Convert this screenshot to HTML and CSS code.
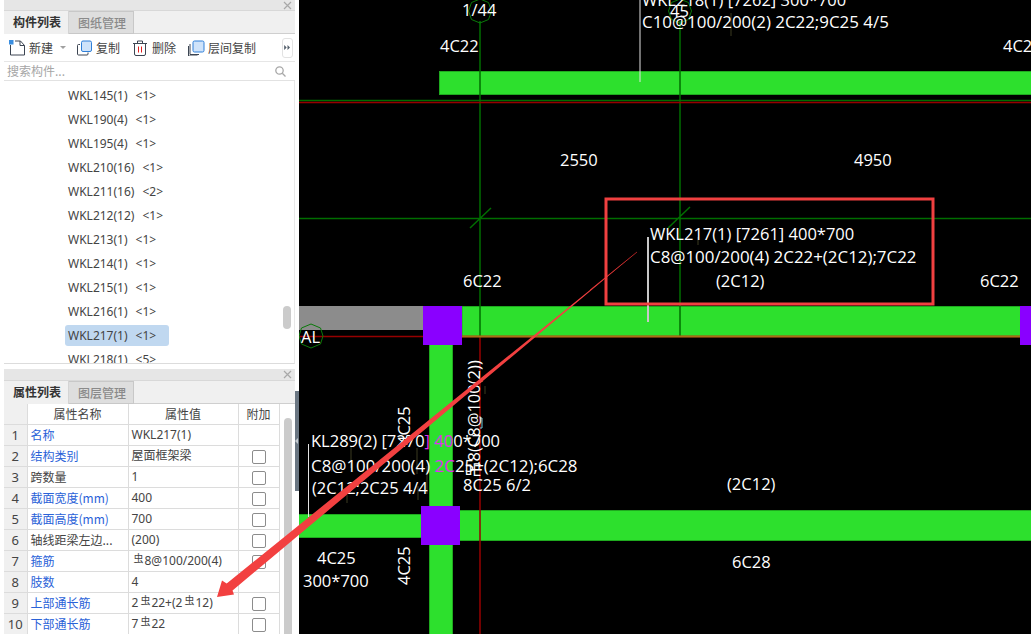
FILE: index.html
```html
<!DOCTYPE html>
<html lang="zh">
<head>
<meta charset="utf-8">
<title>构件列表</title>
<link rel="stylesheet" href="styles.css">
</head>
<body>
<div class="app">
  <aside class="side">
    <section class="panel list-panel">
      <div class="panel-top"><svg class="close" viewBox="0 0 9 9"><path d="M1 1l7 7M8 1l-7 7"/></svg></div>
      <div class="tabs">
        <div class="tab active">构件列表</div>
        <div class="tab">图纸管理</div>
      </div>
      <div class="toolbar">
        <svg class="ico ico-new" viewBox="0 0 16 16"><path class="ln" d="M1.500 5v10h14V5.500L11.500 1H6"/><path class="ln" d="M11 1v4.500h4.500"/><rect class="dot" x="0" y="0" width="4.500" height="4.500"/></svg>
        <span class="tool tool-new">新建</span>
        <span class="caret"></span>
        <svg class="ico ico-copy" viewBox="0 0 16 16"><path class="ln" d="M3 4.500H1.500a1 1 0 0 0-1 1V14a1 1 0 0 0 1 1H10a1 1 0 0 0 1-1v-1.500"/><rect class="sq" x="4.500" y="1" width="10" height="10.500" rx="1.500"/></svg>
        <span class="tool tool-copy">复制</span>
        <svg class="ico ico-del" viewBox="0 0 14 16"><path class="ln" d="M1.500 3.500h11V14a1.500 1.500 0 0 1-1.500 1.500H3A1.500 1.500 0 0 1 1.500 14zM0 3.500h14M4.500 3V1h5v2"/><path class="redbar" d="M5.500 6.500v6M8.500 6.500v6"/></svg>
        <span class="tool tool-del">删除</span>
        <svg class="ico ico-floor" viewBox="0 0 17 16"><path class="ln" d="M2 4v10.500h9M.5 6v10h9"/><rect class="sq" x="5" y="1" width="11" height="11" rx="1.500"/></svg>
        <span class="tool">层间复制</span>
        <span class="more"><svg viewBox="0 0 8 6"><path d="M0 0l3 3-3 3zM4 0l3 3-3 3z"/></svg></span>
      </div>
      <div class="search">
        <span class="placeholder">搜索构件...</span>
        <svg class="mag" viewBox="0 0 11 11"><circle cx="4.500" cy="4.500" r="3.700"/><path d="M7.300 7.300L10.500 10.500"/></svg>
      </div>
      <div class="list-wrap">
        <ul class="list">
          <li><span class="item">WKL145(1)<i>&lt;1&gt;</i></span></li>
          <li><span class="item">WKL190(4)<i>&lt;1&gt;</i></span></li>
          <li><span class="item">WKL195(4)<i>&lt;1&gt;</i></span></li>
          <li><span class="item">WKL210(16)<i>&lt;1&gt;</i></span></li>
          <li><span class="item">WKL211(16)<i>&lt;2&gt;</i></span></li>
          <li><span class="item">WKL212(12)<i>&lt;1&gt;</i></span></li>
          <li><span class="item">WKL213(1)<i>&lt;1&gt;</i></span></li>
          <li><span class="item">WKL214(1)<i>&lt;1&gt;</i></span></li>
          <li><span class="item">WKL215(1)<i>&lt;1&gt;</i></span></li>
          <li><span class="item">WKL216(1)<i>&lt;1&gt;</i></span></li>
          <li><span class="item selected">WKL217(1)<i>&lt;1&gt;</i></span></li>
          <li><span class="item">WKL218(1)<i>&lt;5&gt;</i></span></li>
        </ul>
        <span class="thumb list-thumb"></span>
      </div>
    </section>
    <section class="panel prop-panel">
      <div class="panel-top panel-top-low"><svg class="close" viewBox="0 0 9 9"><path d="M1 1l7 7M8 1l-7 7"/></svg></div>
      <div class="tabs">
        <div class="tab active">属性列表</div>
        <div class="tab">图层管理</div>
      </div>
      <div class="prop-body">
        <table class="props">
          <thead>
            <tr><th class="c-idx"></th><th class="c-name">属性名称</th><th class="c-val">属性值</th><th class="c-add">附加</th></tr>
          </thead>
          <tbody>
            <tr><td class="c-idx">1</td><td class="blue">名称</td><td>WKL217(1)</td><td></td></tr>
            <tr><td class="c-idx">2</td><td class="blue">结构类别</td><td>屋面框架梁</td><td><span class="check"></span></td></tr>
            <tr><td class="c-idx">3</td><td>跨数量</td><td>1</td><td><span class="check"></span></td></tr>
            <tr><td class="c-idx">4</td><td class="blue">截面宽度(mm)</td><td>400</td><td><span class="check"></span></td></tr>
            <tr><td class="c-idx">5</td><td class="blue">截面高度(mm)</td><td>700</td><td><span class="check"></span></td></tr>
            <tr><td class="c-idx">6</td><td>轴线距梁左边...</td><td>(200)</td><td><span class="check"></span></td></tr>
            <tr><td class="c-idx">7</td><td class="blue">箍筋</td><td><span class="rebar">虫</span>8@100/200(4)</td><td><span class="check"></span></td></tr>
            <tr><td class="c-idx">8</td><td class="blue">肢数</td><td>4</td><td></td></tr>
            <tr><td class="c-idx">9</td><td class="blue">上部通长筋</td><td>2<span class="rebar">虫</span>22+(2<span class="rebar">虫</span>12)</td><td><span class="check"></span></td></tr>
            <tr><td class="c-idx">10</td><td class="blue">下部通长筋</td><td>7<span class="rebar">虫</span>22</td><td><span class="check"></span></td></tr>
          </tbody>
        </table>
        <div class="prop-scroll"><span class="thumb prop-thumb"></span></div>
      </div>
    </section>
    <div class="splitter"><span class="split-arrow"></span></div>
  </aside>

  <main class="canvas">
    <svg class="drawing" viewBox="299 0 732 634">
      <!-- beams -->
      <rect class="beam" x="439.500" y="71.500" width="600" height="23"/>
      <rect class="gbeam" x="299" y="306" width="124" height="24"/>
      <rect class="beam" x="462" y="306.500" width="600" height="30"/>
      <rect class="beam" x="429.500" y="340" width="23" height="300"/>
      <rect class="beam" x="295" y="514.500" width="130" height="23"/>
      <rect class="beam" x="458" y="510.500" width="600" height="30"/>
      <!-- axes -->
      <path class="axis-g" d="M299 100.500H1031M299 218.500H1031M480 21V338M680 21V336M470 228L491 208M668 228L690 207"/>
      <path class="axis-r" d="M299 102.500H1031M299 336.500H1031M480 338V634"/>
      <path class="axis-o" d="M462 336.500H1020"/>
      <!-- columns -->
      <rect class="col" x="423" y="306" width="39" height="39"/>
      <rect class="col" x="1020" y="306" width="12" height="39"/>
      <rect class="col" x="421" y="506" width="39" height="39"/>
      <!-- axis bubbles -->
      <path class="bubble" d="M480 -1l8.500 3.500 3 8.500-3 8.500-8.500 3.500-8.500-3.500-3-8.500 3-8.500z"/>
      <path class="bubble" d="M680 -1l8.500 3.500 3 8.500-3 8.500-8.500 3.500-8.500-3.500-3-8.500 3-8.500z"/>
      <path class="bubble" d="M311 324l9.500 4 2.500 8-2.500 8-9.500 4-9.500-4-2.500-8 2.500-8z"/>
      <!-- leaders -->
      <path class="leader" d="M640 0V82M308.500 444V517"/>
      <path class="leader-soft" d="M648 237V322"/>
      <path class="tick" d="M731 13V36M427 466V494M417 448V474M351 446V468M418 486V500M347 495V503M485 386V394M660 230V240M698 237V245"/>
      <path class="redthin" d="M590 290L637 252"/>
      <path class="cyan" d="M480 418h2v10h-2M478 465h3"/>
      <!-- labels -->
      <text x="462" y="16">1/44</text>
      <text x="670" y="17">45</text>
      <text x="642" y="6">WKL218(1) [7262] 300*700</text>
      <text class="wide" x="642" y="28">C10@100/200(2) 2C22;9C25 4/5</text>
      <text x="440" y="52">4C22</text>
      <text x="1003" y="52">4C22</text>
      <text x="560" y="166">2550</text>
      <text x="854" y="166">4950</text>
      <text x="650" y="240">WKL217(1) [7261] 400*700</text>
      <text class="wide" x="650" y="263">C8@100/200(4) 2C22+(2C12);7C22</text>
      <text x="716" y="287">(2C12)</text>
      <text x="463" y="287">6C22</text>
      <text x="980" y="287">6C22</text>
      <text x="301" y="343">AL</text>
      <text x="311" y="447">KL289(2) [7270<tspan class="violet">] 40</tspan>0*700</text>
      <text class="wide" x="311" y="472">C8@100/200(4) <tspan class="violet">2C</tspan>25+(2C12);6C28</text>
      <text x="312" y="494">(2C12;2C25 4/4</text>
      <text x="463" y="491">8C25 6/2</text>
      <text x="727" y="490">(2C12)</text>
      <text x="732" y="568">6C28</text>
      <text x="317" y="564">4C25</text>
      <text x="303" y="587">300*700</text>
      <text class="v1" x="0" y="0">4C25</text>
      <text class="v2" x="0" y="0">4C25</text>
      <text class="v3" x="0" y="0">吊8(C8@100(2))</text>
    </svg>
    <svg class="overlay-frame" viewBox="0 0 327 105"><rect x="0" y="0" width="327" height="105"/></svg>
  </main>
  <svg class="arrow" viewBox="0 0 1031 634">
    <path d="M637 252L232.500 590.500 234 594.500 217 597 222 580.500 226.700 583.500z"/>
  </svg>
</div>
</body>
</html>
```
FILE: styles.css
```css
* { box-sizing: border-box; }
html, body { margin: 0; height: 100%; overflow: hidden; background: #000; }
body { font-family: "Noto Sans CJK SC", "Noto Sans", sans-serif; font-size: 12px; color: #444; }

.app { display: flex; width: 1031px; height: 634px; position: relative; overflow: hidden; }

/* side column */
.side { position: relative; flex: none; width: 299px; height: 634px; padding: 0 4px; background: #fff; display: flex; flex-direction: column; gap: 5px; }
.panel { flex: none; display: flex; flex-direction: column; width: 291px; }
.list-panel { height: 364px; }
.prop-panel { height: 265px; overflow: hidden; }

.panel-top { height: 11px; flex: none; background: #e6e6e6; border-bottom: 1px solid #d8d8d8; display: flex; justify-content: flex-end; align-items: center; padding-right: 3px; }
.panel-top-low { height: 12px; }
.close { width: 9px; height: 9px; fill: none; stroke: #a8a8a8; stroke-width: 1.200; }

.tabs { flex: none; height: 23px; display: flex; background: #f0f0f0; border-bottom: 1px solid #cfcfcf; }
.tab { width: 65px; height: 23px; line-height: 21px; padding-left: 2px; text-align: center; background: #dedede; color: #8a8a8a; border: 1px solid #c8c8c8; border-left: 0; font-weight: 500; }
.tab.active { width: 65px; background: #f0f0f0; color: #333; border: 0; border-right: 1px solid #d4d4d4; font-weight: 700; }

.toolbar { flex: none; height: 28px; display: flex; align-items: center; padding-left: 5px; background: #fff; border-bottom: 1px solid #e6e6e6; }
.ico { flex: none; display: block; fill: none; }
.ico-new { width: 16px; height: 16px; margin-right: 4px; }
.ico-copy { width: 16px; height: 16px; margin-left: 11px; margin-right: 3px; }
.ico-del { width: 14px; height: 16px; margin-left: 13px; margin-right: 5px; }
.ico-floor { width: 17px; height: 16px; margin-left: 12px; margin-right: 3px; }
.ln { stroke: #3c4552; stroke-width: 1; fill: none; }
.dot { fill: #3a8ee0; }
.sq { fill: #cfe3fa; stroke: #2f7fd8; stroke-width: 1; }
.redbar { stroke: #e02020; stroke-width: 1; }
.tool { color: #444; line-height: 16px; }
.caret { width: 0; height: 0; margin-left: 7px; border: 3px solid transparent; border-top: 3px solid #a0a0a0; border-bottom: 0; }
.more { margin-left: auto; margin-right: 2px; width: 11px; height: 20px; border: 1px solid #e2e2e2; border-radius: 3px; display: flex; align-items: center; justify-content: center; }
.more svg { width: 7px; height: 5px; fill: #55606c; }

.search { flex: none; height: 19px; display: flex; align-items: center; justify-content: space-between; padding: 0 9px 0 3px; background: #fff; border-bottom: 1px solid #e2e2e2; }
.placeholder { color: #a6a6a6; line-height: 16px; }
.mag { width: 11px; height: 11px; fill: none; stroke: #a8a8a8; stroke-width: 1.300; }

.list-wrap { position: relative; flex: 1; min-height: 0; overflow: hidden; background: #fff; border-bottom: 1px solid #dcdcdc; border-right: 1px solid #e8e8e8; }
.list { list-style: none; margin: 0; padding: 2px 0 0 61px; }
.list li { height: 24px; display: flex; align-items: center; }
.item { height: 21px; line-height: 21px; padding: 0 13px 0 3px; border-radius: 3px; font-family: "Noto Sans", sans-serif; font-size: 12px; white-space: nowrap; }
.item i { font-style: normal; margin-left: 8px; }
.selected { background: #c0d8f0; }
.thumb { position: absolute; display: block; width: 8px; background: #cbcbcb; border-radius: 4px; }
.list-thumb { left: 279px; top: 225px; height: 23px; }

.prop-body { position: relative; flex: 1; display: flex; background: #fff; }
.props { width: 275px; flex: none; border-collapse: collapse; table-layout: fixed; }
.props th, .props td { height: 21px; padding: 0 0 0 3px; border-right: 1px solid #dcdcdc; border-bottom: 1px solid #dcdcdc; font-weight: 400; text-align: left; white-space: nowrap; overflow: hidden; line-height: 16px; color: #444; }
.props th { height: 20px; text-align: center; padding: 1px 0 0; }
.props th.c-idx, .props td.c-idx { background: #f0f0f0; text-align: center; padding: 0; font-family: "Noto Sans", sans-serif; font-size: 13px; }
.props td:nth-child(3) { font-family: "Noto Sans", "Noto Sans CJK SC", sans-serif; }
.c-idx { width: 23px; }
.c-name { width: 101px; }
.c-val { width: 110px; }
.c-add { width: 41px; }
.props td:last-child { text-align: center; padding: 0; }
.props td.blue { color: #2a62d8; }
.rebar { font-size: 10px; position: relative; top: -3px; margin: 0 1px 0 2px; }
.check { display: inline-block; width: 14px; height: 14px; border: 1px solid #8c8c8c; border-radius: 2px; background: #fff; vertical-align: middle; }
.prop-scroll { position: relative; flex: 1; background: #fff; }
.prop-thumb { left: 4px; top: 14px; height: 300px; }

.splitter { position: absolute; left: 295px; top: 391px; width: 4px; height: 100px; background: #6a7682; display: flex; align-items: center; }
.split-arrow { width: 0; height: 0; border: 3px solid transparent; border-right: 3px solid #c4cad0; border-left: 0; }

/* drawing */
.canvas { position: relative; flex: 1; background: #000; overflow: hidden; }
.drawing { display: block; width: 732px; height: 634px; }
.drawing text { font-family: "Open Sans", "Noto Sans CJK SC", sans-serif; font-size: 16.500px; fill: #fff; }
.drawing .wide { font-size: 16.900px; }
.drawing .violet { fill: #e030f0; }
.drawing .v1 { transform: translate(410px, 445px) rotate(-90deg); }
.drawing .v2 { transform: translate(410px, 585px) rotate(-90deg); }
.drawing .v3 { transform: translate(480px, 478px) rotate(-90deg); }
.beam { fill: #2de02d; stroke: #1faa1f; stroke-width: 1; }
.gbeam { fill: #8c8c8c; }
.col { fill: #8a00ff; }
.axis-g { fill: none; stroke: #006e00; stroke-width: 1.500; }
.axis-r { fill: none; stroke: #960000; stroke-width: 1.500; }
.axis-o { fill: none; stroke: #a87018; stroke-width: 2; }
.bubble { fill: none; stroke: #0a7a0a; stroke-width: 1; }
.leader { fill: none; stroke: #e4e4e4; stroke-width: 1; }
.leader-soft { fill: none; stroke: #c8c8c8; stroke-width: 2; }
.tick { fill: none; stroke: #3a3a20; stroke-width: 1; }
.redthin { fill: none; stroke: #a02020; stroke-width: 1; }
.cyan { fill: none; stroke: #70d0e0; stroke-width: 1; }
.overlay-frame { position: absolute; left: 306.500px; top: 198.500px; width: 327px; height: 105px; overflow: visible; fill: none; stroke: #f04040; stroke-width: 3; }

.arrow { position: absolute; left: 0; top: 0; width: 1031px; height: 634px; pointer-events: none; fill: #f24040; }
```
